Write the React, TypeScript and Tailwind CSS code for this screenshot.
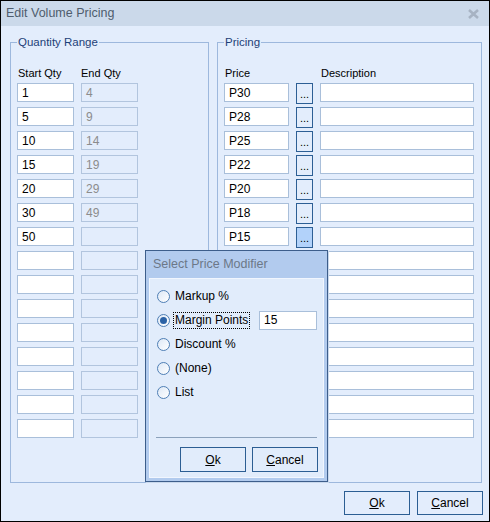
import type { ReactNode } from "react";

const font = { fontFamily: '"Liberation Sans", Arial, sans-serif' };

const startQty = ["1", "5", "10", "15", "20", "30", "50"];
const endQty = ["4", "9", "14", "19", "29", "49"];
const prices = ["P30", "P28", "P25", "P22", "P20", "P18", "P15"];
const ROWS = 15;

function TextBox({ value = "", width, disabled = false }: { value?: string; width: string; disabled?: boolean }) {
  return (
    <div
      className={`${width} flex h-[19px] shrink-0 items-center border px-[4px] text-[12px] leading-none ${
        disabled ? "border-[#b2c5de] bg-[#e3edfc] text-[#8c8c8c]" : "border-[#a9bfda] bg-white text-black"
      }`}
    >
      {value}
    </div>
  );
}

function Group({ title, className, children }: { title: string; className: string; children: ReactNode }) {
  return (
    <fieldset className={`${className} h-[448px] border border-[#9db8dd] px-[6px]`}>
      <legend className="px-[1px] text-[11.5px] leading-[14px] text-[#1d3f78]">{title}</legend>
      {children}
    </fieldset>
  );
}

function DlgButton({ height, children }: { height: string; children: ReactNode }) {
  return (
    <button className={`${height} flex w-[66px] items-center justify-center border border-[#2c5e93] text-[12px] text-black`}>
      {children}
    </button>
  );
}

function Radio({ label, checked = false, focused = false, children }: { label: string; checked?: boolean; focused?: boolean; children?: ReactNode }) {
  return (
    <div className="flex h-[24px] items-center pr-[6px]">
      <span className="ml-[7px] flex h-[13px] w-[13px] items-center justify-center rounded-full border border-[#4f7fb5] bg-gradient-to-br from-[#dde8f6] to-white">
        {checked && <span className="h-[7px] w-[7px] rounded-full bg-[#2b62a6]" />}
      </span>
      <span
        className={`ml-[3px] text-[12px] leading-[15px] text-black ${
          focused ? "border border-dotted border-black px-[1px]" : "px-[2px]"
        }`}
      >
        {label}
      </span>
      {children}
    </div>
  );
}

export default function App() {
  return (
    <div style={font} className="relative h-[522px] w-[490px] overflow-hidden border border-black bg-[#e3edfc]">
      <div className="flex h-[25px] items-center justify-between bg-[#cbd9ea] pl-[5px] pr-[10px]">
        <span className="text-[12.5px] text-[#4f5d6d]">Edit Volume Pricing</span>
        <svg width="11" height="10" viewBox="0 0 11 10">
          <path d="M1 1 L10 9 M10 1 L1 9" stroke="#a7b3c3" strokeWidth="2.6" />
        </svg>
      </div>

      <div className="mt-[9px] flex pl-[9px]">
        <Group title="Quantity Range" className="w-[199px]">
          <div className="mt-[17px] flex gap-[7px] text-[11px] leading-[14px] text-black">
            <span className="w-[57px] pl-[1px]">Start Qty</span>
            <span className="w-[57px]">End Qty</span>
          </div>
          <div className="mt-[3px] flex flex-col gap-[5px]">
            {Array.from({ length: ROWS }).map((_, i) => (
              <div key={i} className="flex h-[19px] gap-[7px]">
                <TextBox width="w-[57px]" value={startQty[i]} />
                <TextBox width="w-[57px]" value={endQty[i]} disabled />
              </div>
            ))}
          </div>
        </Group>

        <Group title="Pricing" className="ml-[8px] w-[265px]">
          <div className="mt-[17px] flex text-[11px] leading-[14px] text-black">
            <span className="w-[96px] pl-[1px]">Price</span>
            <span className="pl-[1px]">Description</span>
          </div>
          <div className="mt-[3px] flex flex-col gap-[5px]">
            {Array.from({ length: ROWS }).map((_, i) => (
              <div key={i} className="flex h-[19px] items-start gap-[7px]">
                <TextBox width="w-[65px]" value={prices[i]} />
                {i < prices.length ? (
                  <div
                    className={`flex h-[21px] w-[17px] shrink-0 items-end justify-center border border-[#2d5f95] pb-[3px] text-[11px] leading-none text-black ${
                      i === 6 ? "bg-[#b2d2fa]" : "bg-[#e3edfc]"
                    }`}
                  >
                    ...
                  </div>
                ) : (
                  <div className="w-[17px] shrink-0" />
                )}
                <TextBox width="w-[154px]" />
              </div>
            ))}
          </div>
        </Group>
      </div>

      <div className="mt-[8px] flex justify-end gap-[7px] pr-[6px]">
        <DlgButton height="h-[24px]">
          <u>O</u>k
        </DlgButton>
        <DlgButton height="h-[24px]">
          <u>C</u>ancel
        </DlgButton>
      </div>

      <div className="absolute left-[144px] top-[249px] flex h-[232px] w-[183px] flex-col border border-[#3d5e8b] bg-[#b2cbee] px-[3px] pb-[3px] shadow-[1px_1px_0_#c9d8ec]">
        <div className="flex h-[27px] items-center pl-[4px] text-[12.5px] text-[#6c7888]">Select Price Modifier</div>
        <div className="flex flex-1 flex-col border border-[#f1f6fe] bg-[#e1ecfb]">
          <div className="mt-[5px] flex flex-col">
            <Radio label="Markup %" />
            <Radio label="Margin Points" checked focused>
              <div className="ml-auto flex h-[19px] w-[58px] items-center border border-[#a9bfda] bg-white px-[4px] text-[12px] text-black">
                15
              </div>
            </Radio>
            <Radio label="Discount %" />
            <Radio label="(None)" />
            <Radio label="List" />
          </div>
          <div className="mx-[6px] mt-[33px] border-t border-[#8ba1bb]" />
          <div className="mt-[9px] flex justify-end gap-[6px] pr-[5px]">
            <DlgButton height="h-[25px]">
              <u>O</u>k
            </DlgButton>
            <DlgButton height="h-[25px]">
              <u>C</u>ancel
            </DlgButton>
          </div>
        </div>
      </div>
    </div>
  );
}
